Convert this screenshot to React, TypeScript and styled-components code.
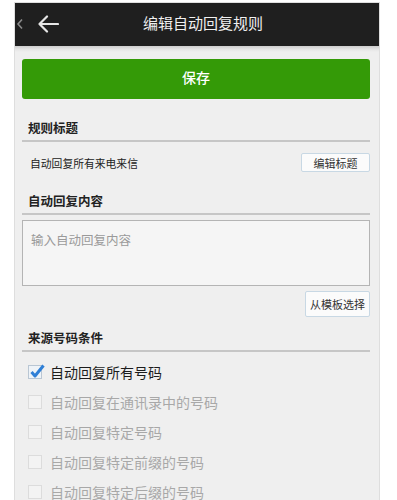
import React from "react";
import styled, { createGlobalStyle } from "styled-components";

const Global = createGlobalStyle`
  html, body { margin: 0; padding: 0; background: #ffffff; }
  body { font-family: "Noto Sans CJK SC", "Noto Sans", sans-serif; }
  * { box-sizing: border-box; }
`;

const Frame = styled.div`
  margin: 2px 0 0 14px;
  width: 366px;
  min-height: 498px;
  border: 1px solid #dedede;
  border-bottom: none;
  background: #efefef;
`;

const Header = styled.div`
  height: 43px;
  background: #1f1f1f;
  display: flex;
  align-items: center;
  position: relative;
`;

const BackGroup = styled.div`
  display: flex;
  align-items: center;
  gap: 13px;
  padding-left: 1px;
  margin-top: -2px;
`;

const HeaderTitle = styled.div`
  position: absolute;
  left: 0;
  right: 0;
  top: 0;
  bottom: 0;
  display: flex;
  align-items: center;
  justify-content: center;
  padding-left: 12px;
  padding-bottom: 4px;
  color: #f0f0f0;
  font-size: 15px;
  pointer-events: none;
`;

const Shade = styled.div`
  height: 6px;
  background: linear-gradient(#cdcdcd, #e6e6e6 60%, #efefef);
`;

const Content = styled.div`
  padding: 7px 9px 0 7px;
  display: flex;
  flex-direction: column;
`;

const SaveButton = styled.button`
  height: 40px;
  border: none;
  border-radius: 3px;
  background: #349a07;
  color: #ffffff;
  font-family: inherit;
  font-size: 14px;
  font-weight: 500;
  padding: 0 0 4px;
`;

const SectionHead = styled.div<{ $top: number }>`
  margin-top: ${(p) => p.$top}px;
  padding: 0 0 2px 6px;
  line-height: 20px;
  font-size: 12.5px;
  font-weight: 700;
  color: #222;
  border-bottom: 2px solid #c6c6c6;
`;

const InfoRow = styled.div`
  margin-top: 11px;
  height: 19px;
  display: flex;
  align-items: center;
  justify-content: space-between;
  padding-left: 8px;
  font-size: 10.8px;
  color: #222;
`;

const SmallButton = styled.button<{ $h: number; $w: number }>`
  height: ${(p) => p.$h}px;
  width: ${(p) => p.$w}px;
  border: 1px solid #c8d8e4;
  border-radius: 2px;
  background: #fbfbfb;
  color: #333;
  font-family: inherit;
  font-size: 11px;
  padding: 0;
`;

const TextArea = styled.div`
  margin-top: 5px;
  height: 66px;
  border: 1px solid #b4b4b4;
  background: #f5f5f5;
  padding: 9px 8px;
  font-size: 12.5px;
  color: #9a9a9a;
`;

const RightRow = styled.div`
  margin-top: 5px;
  display: flex;
  justify-content: flex-end;
`;

const CheckList = styled.div`
  margin-top: 5px;
  display: flex;
  flex-direction: column;
`;

const CheckRow = styled.div<{ $on: boolean }>`
  height: 30px;
  display: flex;
  align-items: center;
  padding-left: 6px;
  gap: 8px;
  font-size: 14px;
  color: ${(p) => (p.$on ? "#1c1c1c" : "#a8a8a8")};
`;

const Box = styled.span<{ $on: boolean }>`
  position: relative;
  width: 14px;
  height: 14px;
  border: 1px solid ${(p) => (p.$on ? "#b9c6d3" : "#dcdcdc")};
  background: ${(p) => (p.$on ? "#eef3f8" : "#f3f3f3")};
  flex: none;
`;

const Tick = styled.svg`
  position: absolute;
  left: 0px;
  top: -3px;
`;

const Back = () => (
  <BackGroup>
    <svg width="8" height="12" viewBox="0 0 8 12">
      <path d="M6 1.5 L2 6 L6 10.5" stroke="#8a8a8a" strokeWidth="1.6" fill="none" />
    </svg>
    <svg width="22" height="18" viewBox="0 0 22 18">
      <path d="M21 9 H2.5 M10 1.5 L2.5 9 L10 16.5" stroke="#e6e6e6" strokeWidth="2.2" fill="none" strokeLinecap="round" strokeLinejoin="round" />
    </svg>
  </BackGroup>
);

const items = [
  "自动回复所有号码",
  "自动回复在通讯录中的号码",
  "自动回复特定号码",
  "自动回复特定前缀的号码",
  "自动回复特定后缀的号码",
];

export default function App() {
  return (
    <>
      <Global />
      <Frame>
        <Header>
          <Back />
          <HeaderTitle>编辑自动回复规则</HeaderTitle>
        </Header>
        <Shade />
        <Content>
          <SaveButton>保存</SaveButton>
          <SectionHead $top={19}>规则标题</SectionHead>
          <InfoRow>
            <span>自动回复所有来电来信</span>
            <SmallButton $h={19} $w={69}>编辑标题</SmallButton>
          </InfoRow>
          <SectionHead $top={19}>自动回复内容</SectionHead>
          <TextArea>输入自动回复内容</TextArea>
          <RightRow>
            <SmallButton $h={26} $w={65}>从模板选择</SmallButton>
          </RightRow>
          <SectionHead $top={11}>来源号码条件</SectionHead>
          <CheckList>
            {items.map((t, i) => (
              <CheckRow key={t} $on={i === 0}>
                <Box $on={i === 0}>
                  {i === 0 && (
                    <Tick width="16" height="16" viewBox="0 0 16 16">
                      <path d="M2.5 9 L6 13 L14.5 2.5" stroke="#2f7fd6" strokeWidth="3" fill="none" strokeLinejoin="round" />
                    </Tick>
                  )}
                </Box>
                {t}
              </CheckRow>
            ))}
          </CheckList>
        </Content>
      </Frame>
    </>
  );
}
